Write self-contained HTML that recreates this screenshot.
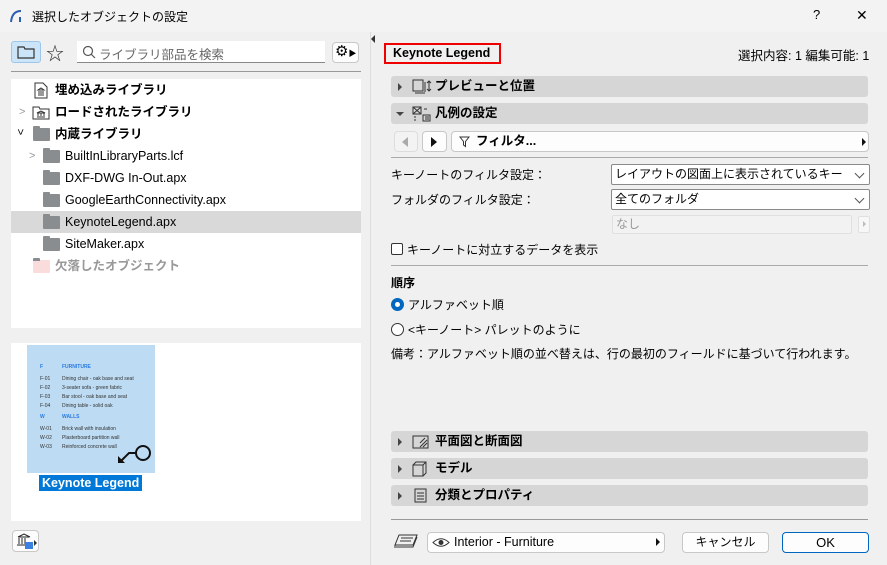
<!DOCTYPE html>
<html><head><meta charset="utf-8"><style>
*{box-sizing:border-box;margin:0;padding:0}
body{width:887px;height:565px;overflow:hidden;background:#f0f0f0;font-family:"Liberation Sans","Noto Sans CJK JP",sans-serif;font-size:12px;color:#000;position:relative}
.a{position:absolute}
.tb{left:0;top:0;width:887px;height:32px;background:#f3f3f3}
.white{background:#fff}
.tree div.r{position:absolute;left:0;height:22px;width:350px;line-height:22px;font-size:12.5px}
.fold{position:absolute;width:17px;height:13px;background:#8a8d90;border-radius:1px}
.fold:before{content:"";position:absolute;left:0;top:-2px;width:7px;height:3px;background:#8a8d90;border-radius:1px 1px 0 0}
.sec{position:absolute;left:391px;width:477px;height:21px;background:#d6d6d6;border-radius:3px;font-weight:bold;font-size:12.5px;line-height:21px}
.sec .tri{position:absolute;left:7px;top:7px;width:0;height:0;border-left:4px solid #444;border-top:4px solid transparent;border-bottom:4px solid transparent}
.sel{position:absolute;background:#fff;border:1px solid #8a8a8a;border-radius:2px;height:21px;line-height:19px;padding-left:3px;font-size:12px}
.chev{position:absolute;right:6px;top:5px;width:7px;height:7px;border-right:1px solid #555;border-bottom:1px solid #555;transform:rotate(45deg)}
.btn{position:absolute;background:#fdfdfd;border:1px solid #c8c8c8;border-radius:4px;text-align:center}
</style></head><body>
<div class="a tb"></div>
<svg class="a" style="left:9px;top:8px" width="16" height="16"><path d="M2 14 Q3 3 12 3 M11 9 L11 14" stroke="#2b5fae" stroke-width="2" fill="none"/></svg>
<div class="a" style="left:32px;top:8px;font-size:12px">選択したオブジェクトの設定</div>
<div class="a" style="left:813px;top:7px;font-size:13px">?</div>
<div class="a" style="left:856px;top:7px;font-size:14px;font-weight:300">✕</div>

<div class="a" style="left:11px;top:41px;width:30px;height:22px;background:#cce4f7;border:1px solid #9cc7ea;border-radius:3px"></div>
<svg class="a" style="left:17px;top:45px" width="18" height="14"><path d="M1 2h6l1 2h9v9H1z" fill="none" stroke="#333" stroke-width="1.2"/></svg>
<div class="a" style="left:46px;top:40px;font-size:18px;color:#333">☆</div>
<div class="a white" style="left:77px;top:41px;width:248px;height:22px;border-bottom:1px solid #888"></div>
<svg class="a" style="left:82px;top:45px" width="14" height="14"><circle cx="6" cy="6" r="4.5" stroke="#555" fill="none" stroke-width="1.2"/><path d="M9 9l4 4" stroke="#555" stroke-width="1.2"/></svg>
<div class="a" style="left:99px;top:44px;color:#666;font-size:12.5px">ライブラリ部品を検索</div>
<div class="btn" style="left:332px;top:42px;width:27px;height:21px;font-size:15px;line-height:18px;text-align:left;padding-left:2px">⚙<span style="font-size:8px">▶</span></div>
<div class="a" style="left:11px;top:71px;width:350px;height:1px;background:#999"></div>

<div class="a white tree" style="left:11px;top:79px;width:350px;height:249px">
 <svg class="a" style="left:23px;top:3px" width="14" height="17"><path d="M1 1h8l4 4v11H1z" fill="#fff" stroke="#333"/><path d="M4 13h6M5 9v3M7 9v3M9 9v3M4 8l3-2 3 2z" stroke="#333" fill="none"/></svg>
 <div class="r" style="top:0;padding-left:44px;font-weight:bold">埋め込みライブラリ</div>
 <div class="a" style="left:8px;top:27px;color:#999;font-size:11px">&gt;</div>
 <svg class="a" style="left:21px;top:26px" width="18" height="15"><path d="M1 2h6l1 2h9v10H1z" fill="#fff" stroke="#333"/><path d="M5 12h8M6 8v3M9 8v3M12 8v3M5 8l4-2 4 2z" stroke="#333" fill="none"/></svg>
 <div class="r" style="top:22px;padding-left:44px;font-weight:bold">ロードされたライブラリ</div>
 <div class="a" style="left:6px;top:47px;font-size:11px;transform:rotate(90deg)">&gt;</div>
 <div class="fold" style="left:22px;top:49px"></div>
 <div class="r" style="top:44px;padding-left:44px;font-weight:bold">内蔵ライブラリ</div>
 <div class="a" style="left:18px;top:71px;color:#999;font-size:11px">&gt;</div>
 <div class="fold" style="left:32px;top:71px"></div>
 <div class="r" style="top:66px;padding-left:54px">BuiltInLibraryParts.lcf</div>
 <div class="fold" style="left:32px;top:93px"></div>
 <div class="r" style="top:88px;padding-left:54px">DXF-DWG In-Out.apx</div>
 <div class="fold" style="left:32px;top:115px"></div>
 <div class="r" style="top:110px;padding-left:54px">GoogleEarthConnectivity.apx</div>
 <div class="r" style="top:132px;background:#d9d9d9"></div>
 <div class="fold" style="left:32px;top:137px"></div>
 <div class="r" style="top:132px;padding-left:54px">KeynoteLegend.apx</div>
 <div class="fold" style="left:32px;top:159px"></div>
 <div class="r" style="top:154px;padding-left:54px">SiteMaker.apx</div>
 <div class="fold" style="left:22px;top:181px;background:#fbdcdc"></div>
 <div class="r" style="top:176px;padding-left:44px;font-weight:bold;color:#999">欠落したオブジェクト</div>
</div>

<div class="a white" style="left:11px;top:343px;width:350px;height:178px"></div>
<div class="a" style="left:27px;top:345px;width:128px;height:128px;background:#bddbf2;font-size:5px;color:#333;line-height:9px;padding:18px 0 0 13px">
<div style="color:#2b7be0;font-weight:bold"><span style="display:inline-block;width:22px">F</span>FURNITURE</div>
<div style="margin-top:3px"><span style="display:inline-block;width:22px">F-01</span>Dining chair - oak base and seat</div>
<div><span style="display:inline-block;width:22px">F-02</span>3-seater sofa - green fabric</div>
<div><span style="display:inline-block;width:22px">F-03</span>Bar stool - oak base and seat</div>
<div><span style="display:inline-block;width:22px">F-04</span>Dining table - solid oak</div>
<div style="color:#2b7be0;font-weight:bold;margin-top:2px"><span style="display:inline-block;width:22px">W</span>WALLS</div>
<div style="margin-top:3px"><span style="display:inline-block;width:22px">W-01</span>Brick wall with insulation</div>
<div><span style="display:inline-block;width:22px">W-02</span>Plasterboard partition wall</div>
<div><span style="display:inline-block;width:22px">W-03</span>Reinforced concrete wall</div>
</div>
<svg class="a" style="left:115px;top:440px" width="40" height="26"><circle cx="28" cy="13" r="7" stroke="#111" stroke-width="2" fill="none"/><path d="M21 13h-7l-8 8" stroke="#111" stroke-width="2" fill="none"/><path d="M3 23l0-7 7 7z" fill="#111"/></svg>
<div class="a" style="left:39px;top:475px;background:#0078d7;color:#fff;font-weight:bold;font-size:12.5px;padding:0 3px;height:16px;line-height:16px">Keynote Legend</div>
<div class="btn" style="left:12px;top:530px;width:27px;height:22px"></div>
<svg class="a" style="left:15px;top:533px" width="24" height="17"><path d="M2 12h13M3 4h11M4 5v6M7 5v6M10 5v6M3 4l6-3 6 3" stroke="#222" fill="none"/><rect x="10" y="9" width="8" height="7" fill="#3b82e0"/><path d="M19 7l3 3-3 3z" fill="#333"/></svg>

<div class="a" style="left:370px;top:32px;width:1px;height:533px;background:#ddd"></div>
<div class="a" style="left:371px;top:35px;border-right:4px solid #333;border-top:4px solid transparent;border-bottom:4px solid transparent"></div>

<div class="a" style="left:384px;top:43px;width:117px;height:21px;border:2px solid #e00;font-weight:bold;font-size:12.5px;line-height:17px;padding-left:7px">Keynote Legend</div>
<div class="a" style="left:738px;top:45px;font-size:12.5px">選択内容: 1 編集可能: 1</div>

<div class="sec" style="top:76px"><div class="tri"></div><span style="position:absolute;left:44px">プレビューと位置</span></div>
<svg class="a" style="left:412px;top:79px" width="20" height="16"><rect x="1" y="1" width="10" height="11" fill="none" stroke="#333"/><path d="M3 14h10M13 3v10M17 2v10M15 4l2-2 2 2M15 10l2 2 2-2" stroke="#333" fill="none"/></svg>
<div class="sec" style="top:103px"><div class="tri" style="left:5px;top:9px;border-left:4px solid transparent;border-right:4px solid transparent;border-top:4px solid #444;border-bottom:0"></div><span style="position:absolute;left:44px">凡例の設定</span></div>
<svg class="a" style="left:412px;top:106px" width="20" height="16"><rect x="1" y="1" width="8" height="7" fill="none" stroke="#333"/><path d="M1 1l8 7M9 1l-8 7M2 11h2M2 14h2M11 9h7v6h-7zM13 11h4M13 13h4M12 3h3" stroke="#333" fill="none"/></svg>

<div class="btn" style="left:394px;top:131px;width:24px;height:21px;background:#f3f3f3;border-color:#ddd"></div>
<div class="a" style="left:402px;top:137px;border-right:6px solid #aaa;border-top:5px solid transparent;border-bottom:5px solid transparent"></div>
<div class="btn" style="left:422px;top:131px;width:25px;height:21px"></div>
<div class="a" style="left:431px;top:137px;border-left:6px solid #111;border-top:5px solid transparent;border-bottom:5px solid transparent"></div>
<div class="btn" style="left:451px;top:131px;width:418px;height:21px;text-align:left;font-weight:bold;font-size:12.5px;line-height:19px;padding-left:24px">フィルタ...</div>
<svg class="a" style="left:459px;top:136px" width="11" height="12"><path d="M1 1h9l-3.5 4.5v5l-2-1.5v-3.5z" fill="none" stroke="#333"/></svg>
<div class="a" style="left:862px;top:138px;border-left:4px solid #111;border-top:4px solid transparent;border-bottom:4px solid transparent"></div>
<div class="a" style="left:391px;top:157px;width:477px;height:1px;background:#aaa"></div>

<div class="a" style="left:391px;top:166px">キーノートのフィルタ設定：</div>
<div class="sel" style="left:611px;top:164px;width:259px">レイアウトの図面上に表示されているキー<div class="chev"></div></div>
<div class="a" style="left:391px;top:191px">フォルダのフィルタ設定：</div>
<div class="sel" style="left:611px;top:189px;width:259px">全てのフォルダ<div class="chev"></div></div>
<div class="sel" style="left:612px;top:215px;width:240px;height:19px;line-height:17px;background:#f2f2f2;border-color:#e0e0e0;color:#999">なし</div>
<div class="a" style="left:858px;top:216px;width:12px;height:17px;background:#f7f7f7;border:1px solid #e0e0e0;border-radius:2px"></div>
<div class="a" style="left:863px;top:221px;border-left:3px solid #bbb;border-top:3px solid transparent;border-bottom:3px solid transparent"></div>

<div class="a" style="left:391px;top:243px;width:12px;height:12px;border:1px solid #333;border-radius:2px;background:#fff"></div>
<div class="a" style="left:407px;top:241px">キーノートに対立するデータを表示</div>
<div class="a" style="left:391px;top:265px;width:477px;height:1px;background:#aaa"></div>

<div class="a" style="left:391px;top:274px;font-weight:bold">順序</div>
<div class="a" style="left:391px;top:298px;width:13px;height:13px;border-radius:50%;background:#0067c0"></div>
<div class="a" style="left:395px;top:302px;width:5px;height:5px;border-radius:50%;background:#fff"></div>
<div class="a" style="left:408px;top:296px">アルファベット順</div>
<div class="a" style="left:391px;top:323px;width:13px;height:13px;border-radius:50%;border:1px solid #333;background:#fff"></div>
<div class="a" style="left:408px;top:321px">&lt;キーノート&gt; パレットのように</div>
<div class="a" style="left:391px;top:345px">備考：アルファベット順の並べ替えは、行の最初のフィールドに基づいて行われます。</div>

<div class="sec" style="top:431px"><div class="tri"></div><span style="position:absolute;left:44px">平面図と断面図</span></div>
<svg class="a" style="left:412px;top:434px" width="18" height="16"><rect x="1" y="2" width="15" height="12" fill="none" stroke="#333"/><path d="M8 13l7-7M11 13l4-4M8 9l5-5" stroke="#333"/></svg>
<div class="sec" style="top:458px"><div class="tri"></div><span style="position:absolute;left:44px">モデル</span></div>
<svg class="a" style="left:412px;top:461px" width="16" height="16"><path d="M1 4h10v11H1zM1 4l3-3h10v11l-3 3M11 4l3-3" fill="none" stroke="#333"/></svg>
<div class="sec" style="top:485px"><div class="tri"></div><span style="position:absolute;left:44px">分類とプロパティ</span></div>
<svg class="a" style="left:414px;top:488px" width="14" height="16"><rect x="1" y="1" width="11" height="13" fill="none" stroke="#333"/><path d="M3 5h7M3 8h7M3 11h7" stroke="#333"/></svg>
<div class="a" style="left:391px;top:519px;width:477px;height:1px;background:#999"></div>

<svg class="a" style="left:393px;top:533px" width="26" height="17"><path d="M6 2h18l-4 10H2z M3 14h17l4-10 M2 12v3" fill="none" stroke="#333"/><path d="M8 5h12M7 8h11" stroke="#333"/></svg>
<div class="btn" style="left:427px;top:532px;width:238px;height:21px;text-align:left;padding-left:26px;line-height:19px;font-size:12.5px">Interior - Furniture</div>
<svg class="a" style="left:432px;top:537px" width="18" height="11"><path d="M1 5.5Q9 -2 17 5.5Q9 13 1 5.5z" fill="none" stroke="#333"/><circle cx="9" cy="5.5" r="2.5" fill="#333"/></svg>
<div class="a" style="left:656px;top:538px;border-left:4px solid #111;border-top:4px solid transparent;border-bottom:4px solid transparent"></div>
<div class="btn" style="left:682px;top:532px;width:87px;height:21px;line-height:19px">キャンセル</div>
<div class="btn" style="left:782px;top:532px;width:87px;height:21px;line-height:19px;border:1px solid #0067c0;font-size:13px">OK</div>
</body></html>
